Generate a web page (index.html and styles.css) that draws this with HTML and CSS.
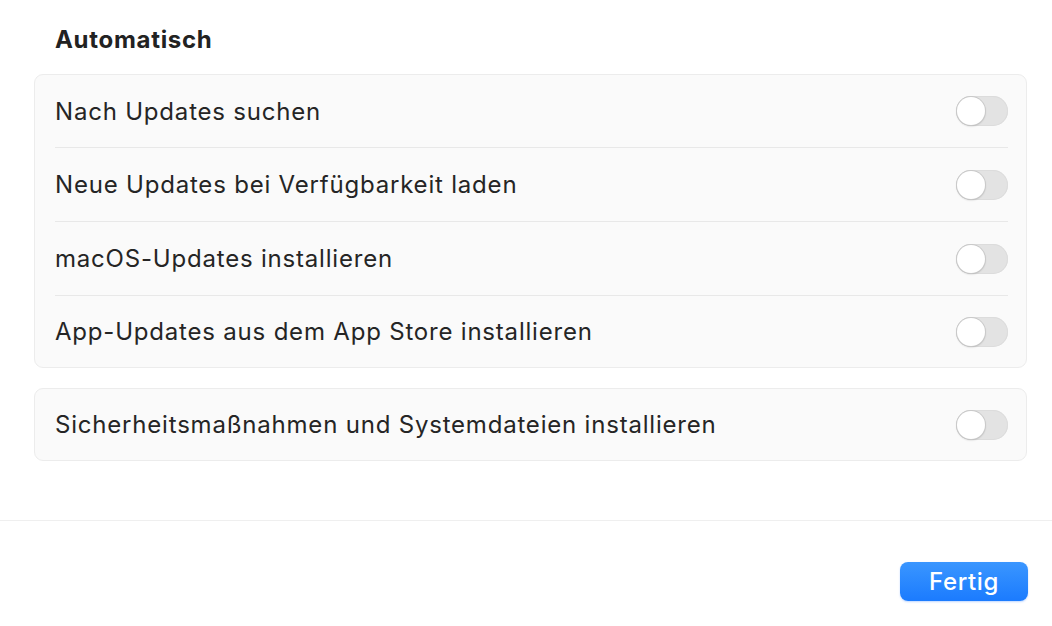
FILE: index.html
```
<!DOCTYPE html>
<html lang="de">
<head>
<meta charset="utf-8">
<link rel="stylesheet" href="styles.css">
</head>
<body>
<div class="sheet">
  <div class="content">
    <h2 class="title">Automatisch</h2>
    <div class="card">
      <div class="row"><span class="label">Nach Updates suchen</span><span class="toggle"><span class="knob"></span></span></div>
      <div class="row"><span class="label">Neue Updates bei Verfügbarkeit laden</span><span class="toggle"><span class="knob"></span></span></div>
      <div class="row"><span class="label">macOS-Updates installieren</span><span class="toggle"><span class="knob"></span></span></div>
      <div class="row"><span class="label">App-Updates aus dem App Store installieren</span><span class="toggle"><span class="knob"></span></span></div>
    </div>
    <div class="card card-single">
      <div class="row"><span class="label">Sicherheitsmaßnahmen und Systemdateien installieren</span><span class="toggle"><span class="knob"></span></span></div>
    </div>
  </div>
  <div class="footer">
    <button class="done">Fertig</button>
  </div>
</div>
</body>
</html>
```
FILE: styles.css
```
html, body {
  margin: 0;
  padding: 0;
  background: #ffffff;
}
body {
  font-family: Inter, "Noto Sans", "Liberation Sans", sans-serif;
  color: #252525;
  width: 1052px;
  height: 626px;
  overflow: hidden;
}
.sheet {
  display: flex;
  flex-direction: column;
  height: 626px;
}
.content {
  padding: 0 25px 0 34px;
  height: 520px;
  box-sizing: border-box;
}
.title {
  margin: 0 0 19px 0;
  padding: 25px 0 0 21px;
  font-size: 24px;
  font-weight: 700;
  color: #222;
  line-height: 30px;
  letter-spacing: 0.7px;
}
.card {
  background: #fafafa;
  border: 1px solid #ececec;
  border-radius: 9px;
  padding: 0 18px 0 20px;
}
.card-single {
  margin-top: 20px;
}
.row {
  display: flex;
  align-items: center;
  justify-content: space-between;
  height: 73px;
  border-bottom: 1px solid #e8e8e8;
}
.row:first-child {
  height: 72px;
}
.row:last-child {
  border-bottom: none;
  height: 71px;
}
.card-single .row {
  height: 71px;
}
.label {
  font-size: 24px;
  letter-spacing: 0.8px;
}
.toggle {
  width: 52px;
  height: 30px;
  border-radius: 15px;
  background: #e3e3e3;
  position: relative;
  box-shadow: inset 0 0 0 1px #dcdcdc;
}
.knob {
  position: absolute;
  left: 1px;
  top: 1px;
  width: 28px;
  height: 28px;
  border-radius: 50%;
  background: #ffffff;
  box-shadow: 0 0 0 1px #c9c9c9, 0 1px 2px rgba(0,0,0,0.25);
}
.footer {
  border-top: 1px solid #efefef;
  flex: 1;
  display: flex;
  justify-content: flex-end;
  align-items: flex-start;
  padding: 41px 24px 0 0;
}
.done {
  width: 128px;
  height: 39px;
  border: none;
  border-radius: 8px;
  background: linear-gradient(#3a96ff, #1b7bfe);
  color: #fff;
  font-family: Inter, "Noto Sans", "Liberation Sans", sans-serif;
  font-size: 24px;
  font-weight: 500;
  letter-spacing: 0.6px;
  box-shadow: 0 1px 2px rgba(0, 100, 255, 0.25);
  padding: 0;
}
```
